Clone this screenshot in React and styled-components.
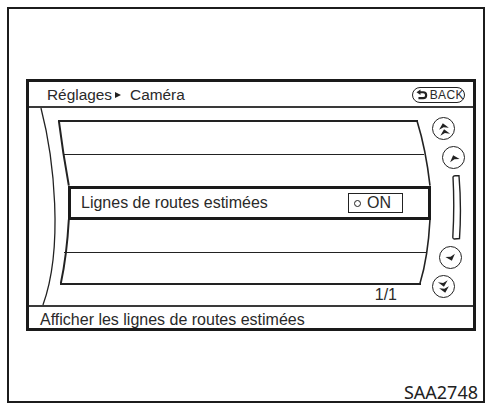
import React from "react";
import styled, { createGlobalStyle } from "styled-components";

const GlobalStyle = createGlobalStyle`
  html, body {
    margin: 0;
    padding: 0;
    background: #fff;
  }
  body {
    font-family: "Liberation Sans", Arial, sans-serif;
    color: #2a2a2a;
  }
`;

const Page = styled.div`
  width: 487px;
  height: 404px;
  box-sizing: border-box;
  padding: 7px 0 0 7px;
  overflow: hidden;
`;

const Frame = styled.div`
  width: 478px;
  height: 396px;
  box-sizing: border-box;
  border: 2px solid #1c1c1c;
  padding: 70px 0 0 17px;
  display: flex;
  flex-direction: column;
`;

const Screen = styled.div`
  width: 450px;
  height: 253px;
  box-sizing: border-box;
  border: 3px solid #1a1a1a;
  display: flex;
  flex-direction: column;
`;

const Header = styled.div`
  height: 26px;
  box-sizing: border-box;
  border-bottom: 2px solid #3a3a3a;
  display: flex;
  align-items: center;
  justify-content: space-between;
  padding: 1px 8px 0 18px;
`;

const Title = styled.div`
  display: flex;
  align-items: center;
  font-size: 15.4px;
  line-height: 15px;
`;

const Crumb = styled.span`
  width: 0;
  height: 0;
  border-top: 3.5px solid transparent;
  border-bottom: 3.5px solid transparent;
  border-left: 6px solid #222;
  margin: 1px 9px 0 3px;
`;

const BackButton = styled.div`
  width: 53px;
  height: 16px;
  box-sizing: border-box;
  border: 1.5px solid #222;
  border-radius: 8px;
  display: flex;
  align-items: center;
  gap: 2px;
  padding: 0 0 0 3px;
  font-size: 12px;
  letter-spacing: 0.4px;
  line-height: 12px;
`;

const Body = styled.div`
  flex: 1;
  display: flex;
`;

const ListPane = styled.div`
  position: relative;
  flex: 1;
  display: flex;
  flex-direction: column;
  padding-top: 12px;
`;

const Decor = styled.svg`
  position: absolute;
  left: 0;
  top: 0;
  width: 100%;
  height: 100%;
  overflow: visible;
  pointer-events: none;
`;

const Rule = styled.div`
  height: ${(p) => p.$w}px;
  background: #222;
  margin: 0 ${(p) => p.$r}px 0 ${(p) => p.$l}px;
`;

const EmptyRow = styled.div`
  height: ${(p) => p.$h}px;
`;

const SelectedRow = styled.div`
  height: 34px;
  box-sizing: border-box;
  margin: 0 1px 0 39px;
  border: 3px solid #1a1a1a;
  display: flex;
  align-items: center;
  justify-content: space-between;
  padding: 0 25px 0 10px;
  font-size: 16px;
  line-height: 16px;
`;

const OnBadge = styled.div`
  width: 55px;
  height: 20px;
  box-sizing: border-box;
  border: 1.5px solid #222;
  display: flex;
  align-items: center;
  gap: 6px;
  padding-left: 5px;
  font-size: 16px;
  line-height: 16px;
`;

const Dot = styled.span`
  width: 7px;
  height: 7px;
  box-sizing: border-box;
  border: 1.5px solid #222;
  border-radius: 50%;
`;

const PageCount = styled.div`
  align-self: flex-end;
  margin: 2px 35px 0 0;
  font-size: 16px;
  line-height: 16px;
`;

const ScrollColumn = styled.div`
  width: 41px;
  display: flex;
  flex-direction: column;
  align-items: flex-start;
  gap: 6px;
  padding-top: 9px;
`;

const RoundButton = styled.div`
  width: 23px;
  height: 23px;
  box-sizing: border-box;
  border: 1.5px solid #222;
  border-radius: 50%;
  margin-left: ${(p) => p.$x}px;
  display: flex;
  align-items: center;
  justify-content: center;
`;

const Track = styled.svg`
  margin-left: ${(p) => p.$x}px;
`;

const Footer = styled.div`
  height: 23px;
  box-sizing: border-box;
  border-top: 2px solid #3a3a3a;
  padding: 5px 0 0 11px;
  font-size: 16px;
  line-height: 16px;
`;

const Code = styled.div`
  align-self: flex-end;
  margin: 52px 5px 0 0;
  font-family: "Noto Sans", "Liberation Sans", sans-serif;
  font-size: 18px;
  line-height: 18px;
  color: #222;
`;

const Heads = ({ count, down, tilt }) => {
  const ys = count === 2 ? [-3, 3] : [0];
  return (
    <svg width="20" height="20" viewBox="0 0 20 20">
      <g transform={`translate(10 10) rotate(${tilt}) scale(1 ${down ? -1 : 1})`} fill="#222">
        {ys.map((y) => (
          <path key={y} d={`M-5 ${y + 2.8} L0 ${y - 2.8} L5 ${y + 2.8} L0 ${y + 1.2} Z`} />
        ))}
      </g>
    </svg>
  );
};

const BackIcon = () => (
  <svg width="12" height="11" viewBox="0 0 12 11">
    <path d="M0.5 3.2 L4.6 0.3 L4.6 6.1 Z" fill="#222" />
    <path d="M4 3.2 H7.4 A3 3 0 0 1 7.4 9.2 H2.5" fill="none" stroke="#222" strokeWidth="2.2" />
  </svg>
);

export default function App() {
  return (
    <>
      <GlobalStyle />
      <Page>
        <Frame>
          <Screen>
            <Header>
              <Title>
                Réglages
                <Crumb />
                Caméra
              </Title>
              <BackButton>
                <BackIcon />
                BACK
              </BackButton>
            </Header>
            <Body>
              <ListPane>
                <Decor viewBox="0 0 403 198" fill="none" stroke="#222">
                  <path d="M11 0 C24 50, 34 140, 13 198" strokeWidth="1.3" />
                  <path d="M29 13 Q33 45 39 78" strokeWidth="2" />
                  <path d="M39 112 Q37 148 31 176" strokeWidth="2" />
                  <path d="M389 13 Q398 42 402 78" strokeWidth="1.6" />
                  <path d="M402 112 Q400 150 392 176" strokeWidth="1.6" />
                </Decor>
                <Rule $w={2} $l={29} $r={14} />
                <EmptyRow $h={32} />
                <Rule $w={1} $l={34} $r={8} />
                <EmptyRow $h={31} />
                <SelectedRow>
                  Lignes de routes estimées
                  <OnBadge>
                    <Dot />
                    ON
                  </OnBadge>
                </SelectedRow>
                <EmptyRow $h={32} />
                <Rule $w={1} $l={35} $r={6} />
                <EmptyRow $h={30} />
                <Rule $w={2} $l={31} $r={11} />
                <PageCount>1/1</PageCount>
              </ListPane>
              <ScrollColumn>
                <RoundButton $x={0}>
                  <Heads count={2} tilt={-12} />
                </RoundButton>
                <RoundButton $x={10}>
                  <Heads count={1} tilt={-18} />
                </RoundButton>
                <Track $x={19} width="11" height="65" viewBox="0 0 11 65">
                  <path
                    d="M2 2 Q2.5 0.8 4 0.8 L8 0.8 Q10.6 32 8.5 63.5 L3.2 64 Q2 64 1.8 62.5 Q3.6 32 2 2 Z"
                    fill="none"
                    stroke="#222"
                    strokeWidth="1.4"
                  />
                </Track>
                <RoundButton $x={7}>
                  <Heads count={1} down tilt={-18} />
                </RoundButton>
                <RoundButton $x={0}>
                  <Heads count={2} down tilt={-12} />
                </RoundButton>
              </ScrollColumn>
            </Body>
            <Footer>Afficher les lignes de routes estimées</Footer>
          </Screen>
          <Code>SAA2748</Code>
        </Frame>
      </Page>
    </>
  );
}
